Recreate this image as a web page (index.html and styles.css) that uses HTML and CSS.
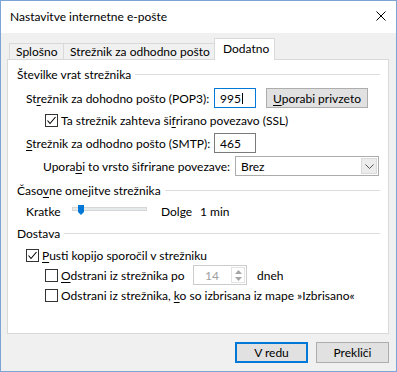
FILE: index.html
```html
<!DOCTYPE html>
<html lang="sl">
<head>
  <meta charset="UTF-8" />
  <title>Nastavitve internetne e-pošte</title>
  <link rel="stylesheet" href="styles.css">
</head>
<body>
  <div class="window">
    <div class="titlebar">
      <span class="title">Nastavitve internetne e-pošte</span>
      <svg class="close" width="10" height="10" viewBox="0 0 10 10"><path d="M0.5 0.5L9.5 9.5M9.5 0.5L0.5 9.5" stroke="#000" stroke-width="1" fill="none"/></svg>
    </div>

    <div class="content">
      <div class="tabs">
        <div class="tab tab-general">Splošno</div>
        <div class="tab tab-outgoing">Strežnik za odhodno pošto</div>
        <div class="tab tab-advanced active">Dodatno</div>
      </div>

      <div class="panel">
        <!-- Številke vrat -->
        <div class="group-head"><span>Številke vrat strežnika</span><i class="rule"></i></div>

        <div class="row field-row row-pop">
          <span class="label-port">St<u>r</u>ežnik za dohodno pošto (POP3):</span>
          <div class="input focused">995<span class="caret"></span></div>
          <button class="btn btn-small"><u>U</u>porabi privzeto</button>
        </div>

        <div class="row check-row row-ssl">
          <span class="checkbox checked"><svg width="11" height="11" viewBox="0 0 11 11"><polyline points="1.5,5.5 4,8.5 9.5,2" stroke="#000" stroke-width="1.1" fill="none"/></svg></span>
          <span>Ta strežnik zahteva ši<u>f</u>rirano povezavo (SSL)</span>
        </div>

        <div class="row field-row row-smtp">
          <span class="label-port"><u>S</u>trežnik za odhodno pošto (SMTP):</span>
          <div class="input">465</div>
        </div>

        <div class="row row-enc">
          <span class="label-enc">Upora<u>b</u>i to vrsto šifrirane povezave:</span>
          <div class="select">
            <span class="select-value">Brez</span>
            <span class="select-btn"><svg width="9" height="5" viewBox="0 0 9 5"><polyline points="0.5,0.5 4.5,4.5 8.5,0.5" stroke="#555" stroke-width="1" fill="none"/></svg></span>
          </div>
        </div>

        <!-- Časovne omejitve -->
        <div class="group-head gap-head"><span>Časo<u>v</u>ne omejitve strežnika</span><i class="rule"></i></div>

        <div class="row slider-row">
          <span class="label-short">Kratke</span>
          <div class="slider">
            <svg class="thumb" width="6" height="10" viewBox="0 0 6 10"><polygon points="0,0 6,0 6,7 3,10 0,7" fill="#0078d7"/></svg>
          </div>
          <span class="label-long">Dolge</span>
          <span>1 min</span>
        </div>

        <!-- Dostava -->
        <div class="group-head gap-head"><span>Dostava</span><i class="rule"></i></div>

        <div class="row check-row row-keep">
          <span class="checkbox checked"><svg width="11" height="11" viewBox="0 0 11 11"><polyline points="1.5,5.5 4,8.5 9.5,2" stroke="#000" stroke-width="1.1" fill="none"/></svg></span>
          <span><u>P</u>usti kopijo sporočil v strežniku</span>
        </div>

        <div class="row check-row row-remove">
          <span class="checkbox"></span>
          <span class="label-remove"><u>O</u>dstrani iz strežnika po</span>
          <div class="spinner">
            <span class="spinner-value">14</span>
            <span class="spinner-btns">
              <svg width="7" height="4" viewBox="0 0 7 4"><polygon points="0,4 3.5,0 7,4" fill="#a6a6a6"/></svg>
              <svg width="7" height="4" viewBox="0 0 7 4"><polygon points="0,0 3.5,4 7,0" fill="#a6a6a6"/></svg>
            </span>
          </div>
          <span class="label-days">dneh</span>
        </div>

        <div class="row check-row row-deleted">
          <span class="checkbox"></span>
          <span>Odstrani iz strežnika, <u>k</u>o so izbrisana iz mape »Izbrisano«</span>
        </div>
      </div>

      <div class="actions">
        <button class="btn btn-default">V redu</button>
        <button class="btn">Prekliči</button>
      </div>
    </div>
  </div>
</body>
</html>
```

FILE: styles.css
```css
* { box-sizing: border-box; }
body {
  margin: 0;
  background-color: #f0f0f0;
  font-family: Lato, 'Noto Sans', sans-serif;
  font-size: 12px;
  color: #000;
}
u { text-decoration: underline; text-underline-offset: 2px; }

.window {
  width: 397px;
  height: 372px;
  border: 1px solid #7ea4d6;
  background-color: #f0f0f0;
}
.titlebar {
  height: 32px;
  background-color: #fff;
  display: flex;
  align-items: center;
  justify-content: space-between;
  padding: 0 10px 2px 9px;
}
.close { display: block; }

.content { padding: 5px 7px 0 6px; }

/* tabs */
.tabs {
  display: flex;
  align-items: flex-end;
  height: 22px;
  margin: 0 0 -1px 2px;
}
.tab {
  height: 16px;
  margin-bottom: 1px;
  border: 1px solid #d9d9d9;
  border-bottom: none;
  border-right: none;
  padding-left: 6px;
  display: flex;
  align-items: center;
  white-space: nowrap;
  background-color: #f0f0f0;
}
.tab-general { width: 54px; }
.tab-outgoing { width: 153px; border-right: 1px solid #d9d9d9; }
.tab.active {
  position: relative;
  z-index: 1;
  width: 61px;
  height: 22px;
  margin-bottom: 0;
  margin-left: -2px;
  padding-left: 8px;
  padding-bottom: 3px;
  border-right: 1px solid #d9d9d9;
  background-color: #fff;
}

/* panel */
.panel {
  height: 275px;
  border: 1px solid #d9d9d9;
  background-color: #fff;
  padding: 6px 8px 0 9px;
}
.group-head {
  display: flex;
  align-items: center;
  height: 16px;
}
.group-head .rule {
  flex: 1;
  height: 1px;
  margin-left: 4px;
  background-color: #dcdcdc;
}
.gap-head { margin-top: 6px; }

.row {
  display: flex;
  align-items: center;
  white-space: nowrap;
}
.field-row { height: 20px; margin-left: 9px; }
.row-pop { margin-top: 6px; }
.row-smtp { margin-top: 5px; }
.label-port { width: 188px; }

.input {
  width: 42px;
  height: 20px;
  border: 1px solid #7a7a7a;
  padding-left: 5px;
  display: flex;
  align-items: center;
}
.input.focused { border-color: #0078d7; }
.caret {
  width: 1px;
  height: 11px;
  margin-left: 1px;
  background-color: #000;
}

.btn {
  height: 21px;
  width: 73px;
  border: 1px solid #adadad;
  background-color: #e1e1e1;
  font-family: inherit;
  font-size: 12px;
  color: #000;
  padding: 0;
}
.btn-small { width: 102px; height: 20px; margin-left: 10px; }
.btn-default { border: 2px solid #0078d7; }

.check-row { height: 16px; margin-left: 28px; }
.row-ssl { margin-top: 4px; }
.checkbox {
  width: 13px;
  height: 13px;
  border: 1px solid #333;
  background-color: #fff;
  margin-right: 3px;
  flex: none;
}
.checkbox svg { display: block; }

.row-enc { height: 20px; margin-top: 3px; margin-left: 26px; }
.label-enc { width: 192px; }
.select {
  width: 144px;
  height: 20px;
  border: 1px solid #acacac;
  display: flex;
  align-items: center;
  justify-content: space-between;
  padding: 1px;
}
.select-value { padding-left: 4px; }
.select-btn {
  width: 16px;
  height: 16px;
  background-color: #ececec;
  border: 1px solid #dadada;
  display: flex;
  align-items: center;
  justify-content: center;
}

.slider-row { height: 16px; margin-top: 5px; margin-left: 9px; }
.label-short { width: 46px; }
.slider {
  position: relative;
  width: 75px;
  height: 4px;
  margin-top: -4px;
  border: 1px solid #d6d6d6;
  background-color: #e7eaea;
}
.thumb {
  position: absolute;
  left: 5px;
  top: -3px;
}
.label-long { width: 39px; margin-left: 14px; }

.row-keep { margin-top: 6px; margin-left: 9px; }
.row-remove { height: 20px; margin-top: 2px; }
.label-remove { width: 132px; }
.spinner {
  width: 54px;
  height: 20px;
  border: 1px solid #cccccc;
  display: flex;
  align-items: center;
  justify-content: space-between;
  padding-left: 11px;
  padding-right: 1px;
  color: #a0a0a0;
}
.spinner-btns {
  width: 14px;
  height: 16px;
  border: 1px solid #e3e3e3;
  display: flex;
  flex-direction: column;
  align-items: center;
  justify-content: space-around;
}
.spinner-btns svg { display: block; }
.label-days { margin-left: 10px; }
.row-deleted { margin-top: 2px; }

.actions {
  display: flex;
  justify-content: flex-end;
  gap: 8px;
  margin-top: 8px;
}
```
